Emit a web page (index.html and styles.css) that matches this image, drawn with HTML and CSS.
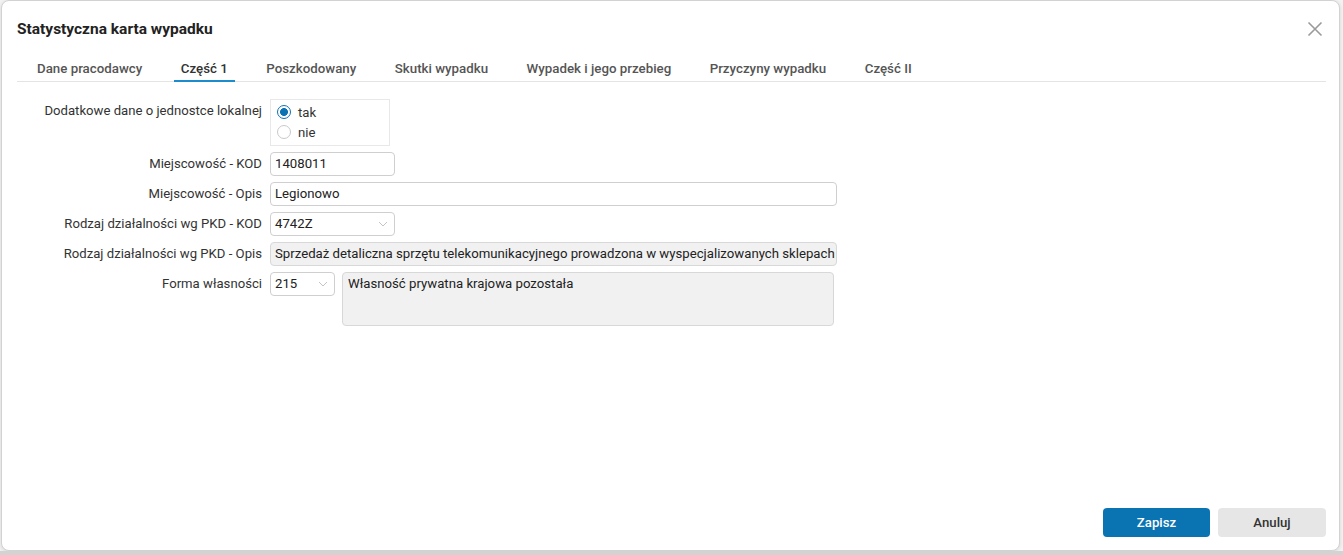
FILE: index.html
```html
<!DOCTYPE html>
<html lang="pl">
<head>
<meta charset="utf-8">
<title>Statystyczna karta wypadku</title>
<link rel="stylesheet" href="styles.css">
</head>
<body>
<div class="dialog">
  <div class="dlg-head">
    <h1 class="title">Statystyczna karta wypadku</h1>
    <svg class="close" width="16" height="16" viewBox="0 0 16 16"><path d="M1.5 1.5 L14.5 14.5 M14.5 1.5 L1.5 14.5" stroke="#9a9a9a" stroke-width="1.6" fill="none"/></svg>
  </div>
  <div class="tabs">
    <div class="tab">Dane pracodawcy</div>
    <div class="tab active">Część 1</div>
    <div class="tab">Poszkodowany</div>
    <div class="tab">Skutki wypadku</div>
    <div class="tab">Wypadek i jego przebieg</div>
    <div class="tab">Przyczyny wypadku</div>
    <div class="tab">Część II</div>
  </div>
  <div class="dlg-body">
    <div class="form">
      <div class="lbl">Dodatkowe dane o jednostce lokalnej</div>
      <div class="radios">
        <div class="radio"><span class="dot checked"></span><span>tak</span></div>
        <div class="radio"><span class="dot"></span><span>nie</span></div>
      </div>

      <div class="lbl">Miejscowość - KOD</div>
      <div class="field"><div class="input w-short">1408011</div></div>

      <div class="lbl">Miejscowość - Opis</div>
      <div class="field"><div class="input w-long">Legionowo</div></div>

      <div class="lbl">Rodzaj działalności wg PKD - KOD</div>
      <div class="field"><div class="input select w-short"><span>4742Z</span><svg class="chev" width="10" height="6" viewBox="0 0 10 6"><path d="M1 1 L5 5 L9 1" stroke="#c4c4c4" stroke-width="1" fill="none"/></svg></div></div>

      <div class="lbl">Rodzaj działalności wg PKD - Opis</div>
      <div class="field"><div class="input disabled w-long">Sprzedaż detaliczna sprzętu telekomunikacyjnego prowadzona w wyspecjalizowanych sklepach</div></div>

      <div class="lbl">Forma własności</div>
      <div class="field combo">
        <div class="input select w-tiny"><span>215</span><svg class="chev" width="10" height="6" viewBox="0 0 10 6"><path d="M1 1 L5 5 L9 1" stroke="#c4c4c4" stroke-width="1" fill="none"/></svg></div>
        <div class="textarea">Własność prywatna krajowa pozostała</div>
      </div>
    </div>
  </div>
  <div class="dlg-foot">
    <button class="btn primary">Zapisz</button>
    <button class="btn secondary">Anuluj</button>
  </div>
</div>
<div class="under"></div>
</body>
</html>
```
FILE: styles.css
```css
* { box-sizing: border-box; }
html, body { margin: 0; padding: 0; }
body {
  width: 1343px;
  height: 555px;
  overflow: hidden;
  background: #f3f3f3;
  font-family: Roboto, "Liberation Sans", Arial, sans-serif;
  color: #333;
}
.dialog {
  margin-left: 1px;
  width: 1339px;
  height: 551px;
  background: #fff;
  border: 1px solid #d2d2d2;
  border-radius: 8px;
  box-shadow: 0 1px 4px rgba(0,0,0,0.12);
  padding: 0 13px 13px 15px;
  display: flex;
  flex-direction: column;
}
.dlg-head {
  display: flex;
  align-items: center;
  justify-content: space-between;
  padding-top: 18px;
  height: 38px;
}
.title {
  margin: 0;
  font-size: 15.5px;
  font-weight: 700;
  line-height: 20px;
  color: #222;
}
.close { margin-right: 3px; }
.tabs {
  margin-top: 18px;
  display: flex;
  gap: 24.5px;
  padding-left: 13px;
  border-bottom: 1px solid #e4e4e4;
  height: 25px;
}
.tab {
  position: relative;
  padding: 0 7px;
  font-size: 13.3px;
  font-weight: 500;
  line-height: 24px;
  color: #555;
  white-space: nowrap;
}
.tab.active { color: #333; }
.tab.active::after {
  content: "";
  position: absolute;
  left: 0; right: 0; bottom: -1px;
  height: 2px;
  background: #1b8ccc;
}
.dlg-body { flex: 1; padding-top: 17px; }
.form {
  display: grid;
  grid-template-columns: 245px 1fr;
  column-gap: 8px;
  row-gap: 6px;
  align-items: start;
}
.lbl {
  text-align: right;
  font-size: 13.15px;
  line-height: 24px;
  color: #333;
  white-space: nowrap;
}
.radios {
  width: 120px;
  height: 47px;
  border: 1px solid #e8e8e8;
  padding: 2px 0 0 6px;
}
.radio {
  display: flex;
  align-items: center;
  gap: 7px;
  height: 20px;
  font-size: 13.2px;
  color: #333;
}
.dot {
  width: 14px;
  height: 14px;
  border-radius: 50%;
  border: 1px solid #c9c9c9;
  background: #fff;
  flex: none;
}
.dot.checked {
  border: 1.5px solid #0d72b4;
  background: radial-gradient(circle, #0d72b4 0 3.6px, #fff 4.3px);
}
.field { display: flex; }
.combo { gap: 7px; align-items: flex-start; }
.input {
  height: 24px;
  border: 1px solid #cfcfcf;
  border-radius: 4px;
  padding: 0 4px;
  font-size: 13.2px;
  line-height: 22px;
  color: #222;
  background: #fff;
  white-space: nowrap;
  overflow: hidden;
}
.w-short { width: 125px; }
.w-long { width: 567px; }
.w-tiny { width: 65px; }
.select {
  display: flex;
  align-items: center;
  justify-content: space-between;
  padding-right: 6px;
}
.chev { flex: none; }
.disabled {
  background: #f1f1f1;
  border-color: #d8d8d8;
  padding-right: 0;
}
.textarea {
  width: 492px;
  height: 54px;
  border: 1px solid #d8d8d8;
  border-radius: 4px;
  background: #f1f1f1;
  padding: 3px 5px;
  font-size: 13.2px;
  line-height: 16px;
  color: #222;
}
.dlg-foot {
  display: flex;
  justify-content: flex-end;
  gap: 8px;
}
.btn {
  height: 29px;
  border: 0;
  border-radius: 4px;
  font-family: Roboto, "Liberation Sans", Arial, sans-serif;
  font-size: 13.2px;
  font-weight: 500;
  padding: 0;
}
.primary { width: 107px; background: #0a73b2; color: #fff; }
.secondary { width: 108px; background: #e6e6e6; color: #333; }
.under {
  height: 4px;
  background: #d3d3d3;
}
```
